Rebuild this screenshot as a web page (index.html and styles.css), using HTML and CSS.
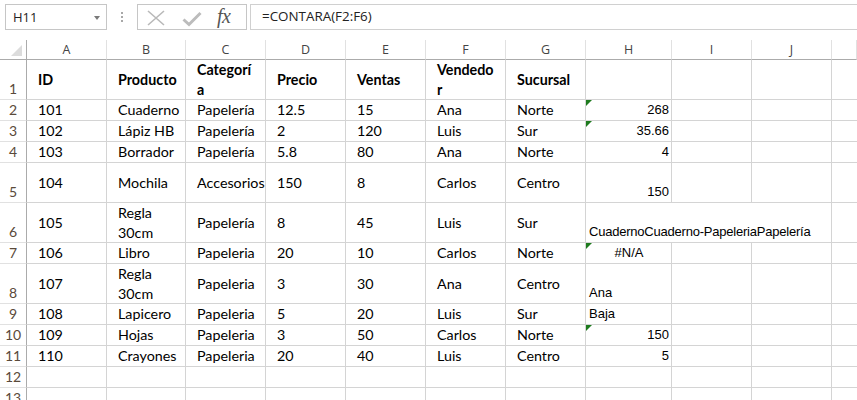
FILE: index.html
```html
<!DOCTYPE html>
<html lang="es">
<head>
<meta charset="utf-8">
<title>Hoja</title>
<link rel="stylesheet" href="styles.css">
</head>
<body>
<div class="toolbar">
  <div class="namebox"><span class="nb-text">H11</span><span class="nb-arrow"></span></div>
  <div class="dots"><i></i><i></i><i></i></div>
  <div class="fxbox">
    <svg class="ico-x" width="18" height="16" viewBox="0 0 18 16"><path d="M1 1 L17 15 M17 1 L1 15" stroke="#b9b9b9" stroke-width="1.6" fill="none"/></svg>
    <svg class="ico-check" width="20" height="16" viewBox="0 0 20 16"><path d="M1.5 8.5 L7 13.5 L18.5 2" stroke="#bcbcbc" stroke-width="3" fill="none"/></svg>
    <span class="fx">fx</span>
  </div>
  <div class="formula">=CONTARA(F2:F6)</div>
</div>

<div class="sheet">
  <div class="corner"><span class="tri"></span></div>
  <div class="ch">A</div><div class="ch">B</div><div class="ch">C</div><div class="ch">D</div><div class="ch">E</div><div class="ch">F</div><div class="ch">G</div><div class="ch">H</div><div class="ch">I</div><div class="ch">J</div><div class="ch last"></div>

  <div class="rh">1</div>
  <div class="c b">ID</div><div class="c b">Producto</div><div class="c b wrap">Categorí<br>a</div><div class="c b">Precio</div><div class="c b">Ventas</div><div class="c b wrap">Vendedo<br>r</div><div class="c b">Sucursal</div><div class="h"></div><div class="e"></div><div class="e"></div><div class="e last"></div>

  <div class="rh">2</div>
  <div class="c">101</div><div class="c">Cuaderno</div><div class="c">Papelería</div><div class="c">12.5</div><div class="c">15</div><div class="c">Ana</div><div class="c">Norte</div><div class="h r flag">268</div><div class="e"></div><div class="e"></div><div class="e last"></div>

  <div class="rh">3</div>
  <div class="c">102</div><div class="c">Lápiz HB</div><div class="c">Papelería</div><div class="c">2</div><div class="c">120</div><div class="c">Luis</div><div class="c">Sur</div><div class="h r flag">35.66</div><div class="e"></div><div class="e"></div><div class="e last"></div>

  <div class="rh">4</div>
  <div class="c">103</div><div class="c">Borrador</div><div class="c">Papelería</div><div class="c">5.8</div><div class="c">80</div><div class="c">Ana</div><div class="c">Norte</div><div class="h r">4</div><div class="e"></div><div class="e"></div><div class="e last"></div>

  <div class="rh">5</div>
  <div class="c">104</div><div class="c">Mochila</div><div class="c">Accesorios</div><div class="c">150</div><div class="c">8</div><div class="c">Carlos</div><div class="c">Centro</div><div class="h r">150</div><div class="e"></div><div class="e"></div><div class="e last"></div>

  <div class="rh">6</div>
  <div class="c">105</div><div class="c wrap">Regla<br>30cm</div><div class="c">Papelería</div><div class="c">8</div><div class="c">45</div><div class="c">Luis</div><div class="c">Sur</div><div class="h ov tight">CuadernoCuaderno-PapeleriaPapelería</div><div class="e ov"></div><div class="e"></div><div class="e last"></div>

  <div class="rh">7</div>
  <div class="c">106</div><div class="c">Libro</div><div class="c">Papeleria</div><div class="c">20</div><div class="c">10</div><div class="c">Carlos</div><div class="c">Norte</div><div class="h mid flag">#N/A</div><div class="e"></div><div class="e"></div><div class="e last"></div>

  <div class="rh">8</div>
  <div class="c">107</div><div class="c wrap">Regla<br>30cm</div><div class="c">Papeleria</div><div class="c">3</div><div class="c">30</div><div class="c">Ana</div><div class="c">Centro</div><div class="h">Ana</div><div class="e"></div><div class="e"></div><div class="e last"></div>

  <div class="rh">9</div>
  <div class="c">108</div><div class="c">Lapicero</div><div class="c">Papeleria</div><div class="c">5</div><div class="c">20</div><div class="c">Luis</div><div class="c">Sur</div><div class="h">Baja</div><div class="e"></div><div class="e"></div><div class="e last"></div>

  <div class="rh">10</div>
  <div class="c">109</div><div class="c">Hojas</div><div class="c">Papeleria</div><div class="c">3</div><div class="c">50</div><div class="c">Carlos</div><div class="c">Norte</div><div class="h r flag">150</div><div class="e"></div><div class="e"></div><div class="e last"></div>

  <div class="rh">11</div>
  <div class="c">110</div><div class="c">Crayones</div><div class="c">Papeleria</div><div class="c">20</div><div class="c">40</div><div class="c">Luis</div><div class="c">Centro</div><div class="h r">5</div><div class="e"></div><div class="e"></div><div class="e last"></div>

  <div class="rh">12</div>
  <div class="e"></div><div class="e"></div><div class="e"></div><div class="e"></div><div class="e"></div><div class="e"></div><div class="e"></div><div class="e"></div><div class="e"></div><div class="e"></div><div class="e last"></div>

  <div class="rh">13</div>
  <div class="e"></div><div class="e"></div><div class="e"></div><div class="e"></div><div class="e"></div><div class="e"></div><div class="e"></div><div class="e"></div><div class="e"></div><div class="e"></div><div class="e last"></div>
</div>
</body>
</html>
```
FILE: styles.css
```css
html, body {
  margin: 0;
  padding: 0;
  background: #ffffff;
  overflow: hidden;
}
body {
  width: 857px;
  height: 400px;
  font-family: Lato, "Liberation Sans", sans-serif;
  color: #000;
}

/* ---------- formula bar ---------- */
.toolbar {
  height: 40px;
  box-sizing: border-box;
  padding-top: 4px;
  display: flex;
  align-items: flex-start;
}
.namebox {
  margin-left: 5px;
  width: 102px;
  height: 26px;
  box-sizing: border-box;
  border: 1px solid #c6c6c6;
  display: flex;
  align-items: center;
  justify-content: space-between;
  padding: 0 6px 0 7px;
  font-family: "Open Sans", "Liberation Sans", sans-serif;
  font-size: 13px;
  color: #222;
}
.nb-arrow {
  width: 0;
  height: 0;
  border-left: 3.5px solid transparent;
  border-right: 3.5px solid transparent;
  border-top: 4px solid #7a7a7a;
  margin-top: 1px;
}
.dots {
  width: 2px;
  margin: 8px 14px 0 14px;
  display: flex;
  flex-direction: column;
  gap: 2px;
}
.dots i {
  display: block;
  width: 2px;
  height: 2px;
  background: #a8a8a8;
}
.fxbox {
  width: 110px;
  height: 26px;
  box-sizing: border-box;
  border: 1px solid #c6c6c6;
  display: flex;
  align-items: center;
  position: relative;
}
.ico-x {
  margin-left: 9px;
  margin-top: 2px;
}
.ico-check {
  margin-left: 17px;
  margin-top: 4px;
}
.fx {
  margin-left: 15px;
  font-family: "Liberation Serif", serif;
  font-style: italic;
  font-size: 20px;
  color: #555;
  letter-spacing: -0.5px;
  margin-top: -1px;
}
.formula {
  margin-left: 3px;
  flex: 1;
  height: 26px;
  box-sizing: border-box;
  border: 1px solid #d0d0d0;
  border-right: none;
  padding-left: 11px;
  font-family: "Open Sans", "Liberation Sans", sans-serif;
  font-size: 13.4px;
  line-height: 23px;
  color: #222;
}

/* ---------- sheet grid ---------- */
.sheet {
  display: grid;
  grid-template-columns: 27px 80px 79px 80px 80px 80px 80px 80px 86px 80px 80px 1fr;
  grid-template-rows: 20px 40px 21px 21px 21px 40px 40px 21px 40px 21px 21px 21px 21px 21px;
}
.sheet > div {
  box-sizing: border-box;
  border-right: 1px solid #d4d4d4;
  border-bottom: 1px solid #d4d4d4;
  min-width: 0;
}
.sheet > div.last {
  border-right: none;
}

.corner {
  border-right: 1px solid #ababab !important;
  border-bottom: 1px solid #ababab !important;
  position: relative;
}
.tri {
  position: absolute;
  right: 4px;
  bottom: 3px;
  width: 0;
  height: 0;
  border-left: 11px solid transparent;
  border-bottom: 11px solid #dcdcdc;
}
.ch {
  border-bottom: 1px solid #ababab !important;
  border-right: 1px solid #e1e1e1 !important;
  font-family: "Open Sans", "Liberation Sans", sans-serif;
  font-size: 12.5px;
  color: #444;
  text-align: center;
  line-height: 19px;
}
.rh {
  border-right: 1px solid #ababab !important;
  border-bottom: 1px solid #e1e1e1 !important;
  font-size: 14px;
  color: #5a4a3a;
  text-align: center;
  display: flex;
  align-items: flex-end;
  justify-content: center;
  line-height: 20px;
}

.c {
  font-size: 14.3px;
  line-height: 20px;
  padding-left: 11px;
  display: flex;
  align-items: center;
  white-space: nowrap;
  overflow: hidden;
}
.c.wrap {
  white-space: normal;
}
.c.b {
  font-weight: 700;
}

.h {
  font-family: "Liberation Sans", Arial, sans-serif;
  font-size: 13px;
  line-height: 20px;
  padding: 0 2px 0 3px;
  display: flex;
  align-items: flex-end;
  white-space: nowrap;
  position: relative;
}
.h.tight {
  letter-spacing: -0.22px;
}
.h.r {
  justify-content: flex-end;
}
.h.mid {
  justify-content: center;
  align-items: center;
}
.sheet > div.ov {
  border-right: none;
  overflow: visible;
}
.flag::before {
  content: "";
  position: absolute;
  left: 0;
  top: 0;
  width: 0;
  height: 0;
  border-top: 6px solid #1e7b1e;
  border-right: 6px solid transparent;
}
```
